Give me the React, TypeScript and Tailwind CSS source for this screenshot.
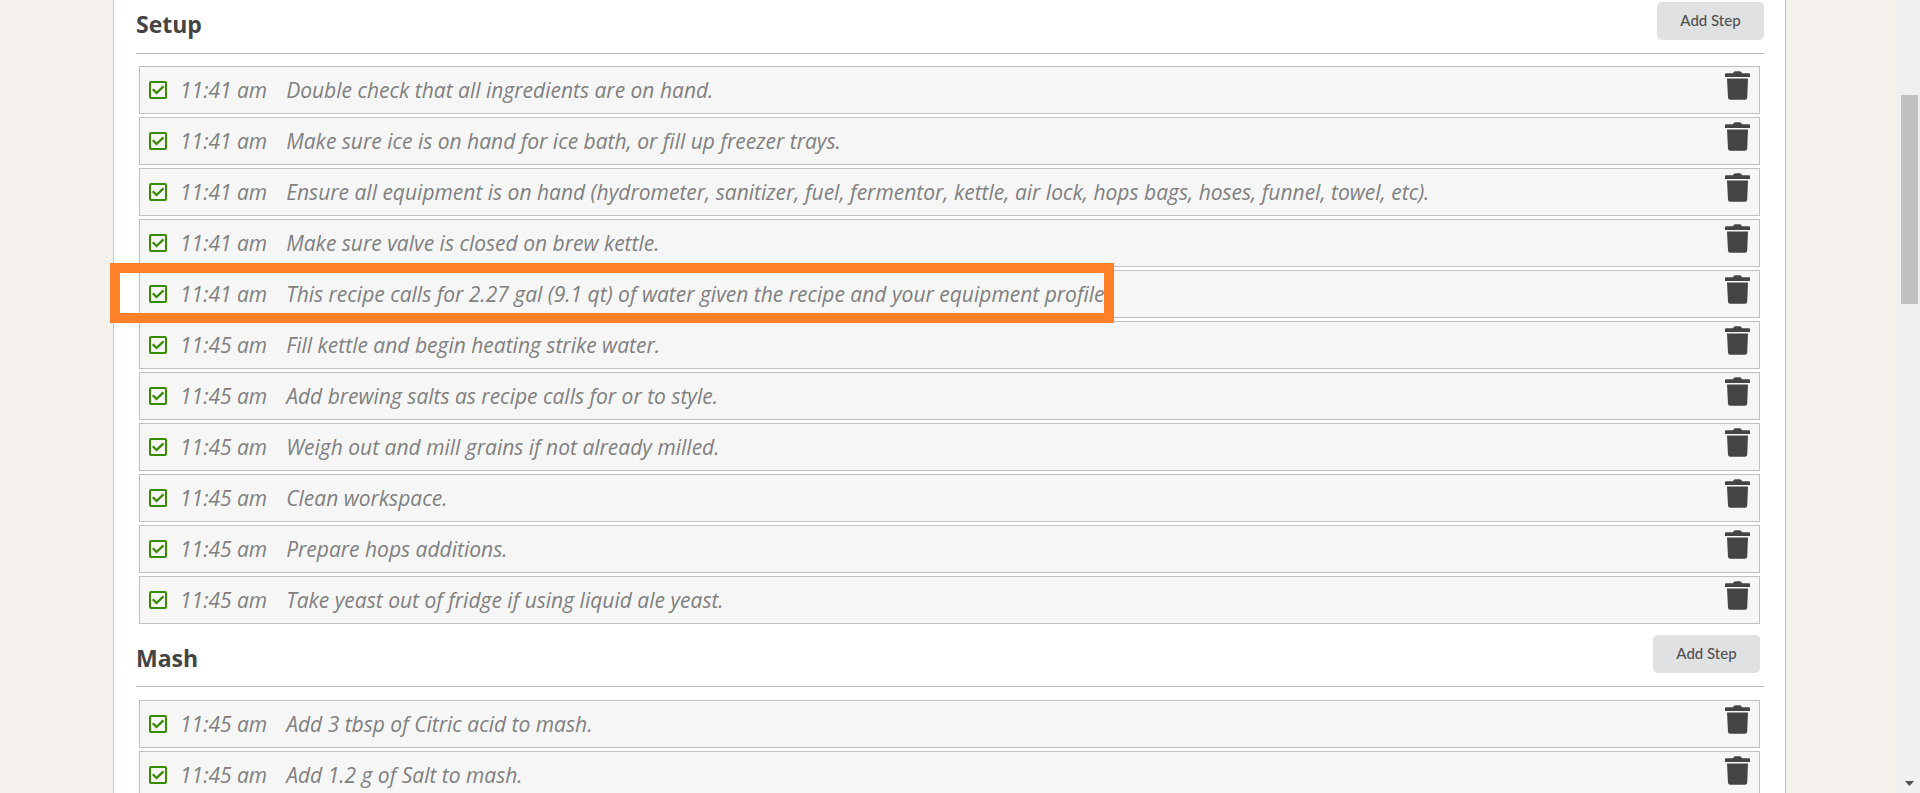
interface Step {
  time: string;
  text: string;
  highlighted?: boolean;
}

const setupSteps: Step[] = [
  { time: '11:41 am', text: 'Double check that all ingredients are on hand.' },
  { time: '11:41 am', text: 'Make sure ice is on hand for ice bath, or fill up freezer trays.' },
  {
    time: '11:41 am',
    text: 'Ensure all equipment is on hand (hydrometer, sanitizer, fuel, fermentor, kettle, air lock, hops bags, hoses, funnel, towel, etc).',
  },
  { time: '11:41 am', text: 'Make sure valve is closed on brew kettle.' },
  {
    time: '11:41 am',
    text: 'This recipe calls for 2.27 gal (9.1 qt) of water given the recipe and your equipment profile.',
    highlighted: true,
  },
  { time: '11:45 am', text: 'Fill kettle and begin heating strike water.' },
  { time: '11:45 am', text: 'Add brewing salts as recipe calls for or to style.' },
  { time: '11:45 am', text: 'Weigh out and mill grains if not already milled.' },
  { time: '11:45 am', text: 'Clean workspace.' },
  { time: '11:45 am', text: 'Prepare hops additions.' },
  { time: '11:45 am', text: 'Take yeast out of fridge if using liquid ale yeast.' },
];

const mashSteps: Step[] = [
  { time: '11:45 am', text: 'Add 3 tbsp of Citric acid to mash.' },
  { time: '11:45 am', text: 'Add 1.2 g of Salt to mash.' },
];

function TrashIcon() {
  return (
    <svg width="25" height="29" viewBox="0 0 25 29" fill="#444444" aria-hidden="true">
      <path d="M8 2.2 Q8.5 0.2 10.5 0.2 H14.5 Q16.5 0.2 17 2.2 H24 Q25 2.2 25 3.2 V6 H0 V3.2 Q0 2.2 1 2.2 Z" />
      <path d="M2 7.5 H23 L22.2 26.8 Q22 28.8 20 28.8 H5.2 Q3.2 28.8 3 26.8 Z" />
    </svg>
  );
}

function StepRow({ id, step }: { id: string; step: Step }) {
  return (
    <li className="relative flex h-12 items-start border border-[#c0c0c0] bg-[#f6f6f6] px-[9px]">
      <span className="relative mt-[14px] h-[18px] w-[18px] shrink-0">
        <input
          id={id}
          type="checkbox"
          defaultChecked
          className="peer block h-[18px] w-[18px] appearance-none rounded-[2px] border-2 border-[#378b00]"
        />
        <svg
          className="pointer-events-none absolute inset-0 hidden peer-checked:block"
          width="18"
          height="18"
          viewBox="0 0 18 18"
          fill="none"
          stroke="#378b00"
          strokeWidth="2.3"
          aria-hidden="true"
        >
          <path d="M3.8 8.3 L7.5 12 L14.5 5.3" />
        </svg>
      </span>
      <label
        htmlFor={id}
        className="ml-[13px] mt-2 flex flex-1 gap-[19px] whitespace-nowrap text-[21px] leading-[30px] italic text-[#808080]"
      >
        <span>{step.time}</span>
        <span>{step.text}</span>
      </label>
      <button type="button" aria-label="Delete step" className="mt-1 shrink-0">
        <TrashIcon />
      </button>
      {step.highlighted && (
        <div className="pointer-events-none absolute -left-[30px] -top-2 z-10 h-[60px] w-[1004px] border-[10px] border-[#ff8027]" />
      )}
    </li>
  );
}

function AddStepButton() {
  return (
    <button
      type="button"
      className="h-[38px] w-[107px] rounded-[5px] bg-[#e0e1e2] pb-[2px] font-['Lato',sans-serif] text-[15px] leading-[16px] font-medium text-[#505051]"
    >
      Add Step
    </button>
  );
}

export default function App() {
  return (
    <div className="flex h-screen overflow-hidden bg-[#f4f0eb] font-['Open_Sans','Noto_Sans',sans-serif]">
      <div className="min-w-0 flex-1 px-[113px]">
        <main className="min-h-screen border-x border-[#c6c6c6] bg-white pl-[22px] pr-[21px]">
          <section>
            <header className="flex h-[54px] items-start justify-between border-b border-[#bbbbbb] pt-[2px]">
              <h2 className="mt-[7px] text-[23px] leading-[30px] font-bold text-[#444444]">Setup</h2>
              <AddStepButton />
            </header>
            <ul className="ml-[3px] mr-1 mt-3 flex flex-col gap-[3px]">
              {setupSteps.map((step, i) => (
                <StepRow key={i} id={`setup-${i}`} step={step} />
              ))}
            </ul>
          </section>
          <section className="mt-[9px]">
            <header className="flex h-[54px] items-start justify-between border-b border-[#bbbbbb] pt-[2px] pr-1">
              <h2 className="mt-2 text-[23px] leading-[30px] font-bold text-[#444444]">Mash</h2>
              <AddStepButton />
            </header>
            <ul className="ml-[3px] mr-1 mt-[13px] flex flex-col gap-[3px]">
              {mashSteps.map((step, i) => (
                <StepRow key={i} id={`mash-${i}`} step={step} />
              ))}
            </ul>
          </section>
        </main>
      </div>
      {/* scrollbar */}
      <div className="flex w-[21px] shrink-0 flex-col items-center justify-between bg-[#f0f0f0] pt-[95px] pb-[7px]">
        <div className="h-[209px] w-[17px] bg-[#c1c1c1]" />
        <svg width="9" height="5" viewBox="0 0 9 5" fill="#505050" aria-hidden="true">
          <path d="M0 0 H9 L4.5 5 Z" />
        </svg>
      </div>
    </div>
  );
}
